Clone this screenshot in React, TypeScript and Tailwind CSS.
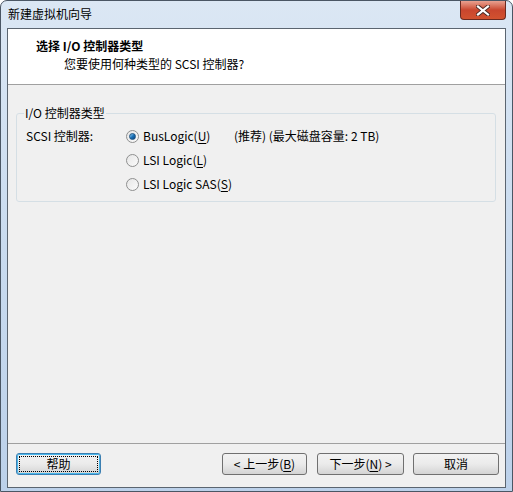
import React from "react";

const font = { fontFamily: '"Noto Sans CJK SC", "Noto Sans", sans-serif' };

function Radio({ checked }: { checked?: boolean }) {
  return (
    <span className="w-[13px] h-[13px] rounded-full border border-[#8e8f8f] bg-gradient-to-br from-[#e6e6e6] to-[#fbfbfb] flex items-center justify-center shrink-0">
      {checked && (
        <span className="w-[7px] h-[7px] rounded-full bg-gradient-to-br from-[#8fd2f7] via-[#1a72b8] to-[#0b3f7a] border border-[#1c5180]" />
      )}
    </span>
  );
}

function Btn({
  children,
  focused,
  w = "w-[85px]",
}: {
  children: React.ReactNode;
  focused?: boolean;
  w?: string;
}) {
  return (
    <div
      className={
        w +
        " h-[22px] rounded-[3px] flex items-center justify-center text-[12px] text-black bg-gradient-to-b from-[#f2f2f2] via-[#ebebeb] to-[#d4d4d4] " +
        (focused
          ? "border border-[#3c7fb1] shadow-[0_0_0_1px_#48b7ec_inset]"
          : "border border-[#707070]")
      }
    >
      {focused ? (
        <span className="w-[79px] h-[16px] border border-dotted border-black flex items-center justify-center leading-none">
          {children}
        </span>
      ) : (
        children
      )}
    </div>
  );
}

function Row({
  label,
  ul,
  rest,
  checked,
  extra,
}: {
  label: string;
  ul: string;
  rest: string;
  checked?: boolean;
  extra?: string;
}) {
  return (
    <div className="flex items-center h-[24px]">
      <Radio checked={checked} />
      <span className="ml-[4px] w-[91px]">
        {label}
        <span className="underline underline-offset-2">{ul}</span>
        {rest}
      </span>
      {extra && <span>{extra}</span>}
    </div>
  );
}

export default function App() {
  return (
    <div
      className="w-[513px] h-[492px] flex flex-col rounded-t-[7px] border border-[#4a5664] bg-gradient-to-b from-[#dbe7f4] via-[#c9dbef] to-[#bcd1ea] overflow-hidden"
      style={font}
    >
      {/* title bar */}
      <div className="h-[27px] flex items-start justify-between shrink-0">
        <div className="pl-[7px] pt-[5px] text-[12px] leading-[16px] text-black">
          新建虚拟机向导
        </div>
        <div className="mr-[6px] w-[46px] h-[19px] rounded-b-[4px] border border-t-0 border-[#6a2a20] bg-gradient-to-b from-[#e8a190] via-[#c9462e] to-[#d2522f] flex items-center justify-center">
          <svg width="14" height="11" viewBox="0 0 14 11">
            <path
              d="M2 1.5 L12 9.5 M12 1.5 L2 9.5"
              stroke="#4a2a25"
              strokeWidth="4"
              strokeLinecap="square"
            />
            <path
              d="M2 1.5 L12 9.5 M12 1.5 L2 9.5"
              stroke="#ffffff"
              strokeWidth="2.2"
              strokeLinecap="square"
            />
          </svg>
        </div>
      </div>

      {/* client area */}
      <div className="mx-[6px] mb-[3px] flex-1 flex flex-col border border-[#5b6570] bg-[#f0f0f0] text-[12px] text-black">
        <div className="h-[56px] bg-white border-b border-[#a0a0a0] shrink-0 pl-[28px] pt-[9px] flex flex-col gap-[2px]">
          <div className="font-bold leading-[16px]">选择 I/O 控制器类型</div>
          <div className="pl-[28px] leading-[16px]">
            您要使用何种类型的 SCSI 控制器?
          </div>
        </div>

        <div className="flex-1 flex flex-col">
          <fieldset className="mt-[20px] ml-[8px] mr-[9px] border border-[#d5dfe5] rounded-[3px] px-[9px] pb-[5px] pt-[3px]">
            <legend className="ml-[-2px] px-[1px] leading-[16px]">
              I/O 控制器类型
            </legend>
            <div className="flex leading-[16px]">
              <div className="w-[100px] h-[24px] flex items-center">
                SCSI 控制器:
              </div>
              <div className="flex flex-col">
                <Row
                  label="BusLogic("
                  ul="U"
                  rest=")"
                  checked
                  extra="(推荐) (最大磁盘容量: 2 TB)"
                />
                <Row label="LSI Logic(" ul="L" rest=")" />
                <Row label="LSI Logic SAS(" ul="S" rest=")" />
              </div>
            </div>
          </fieldset>
        </div>

        <div className="h-[44px] border-t border-[#a0a0a0] shrink-0 flex items-start pt-[9px] pl-[8px] pr-[6px]">
          <Btn focused>帮助</Btn>
          <div className="flex-1" />
          <div className="flex">
            <Btn>
              &lt; 上一步(<span className="underline underline-offset-2">B</span>)
            </Btn>
            <div className="w-[10px]" />
            <Btn w="w-[87px]">
              下一步(<span className="underline underline-offset-2">N</span>) &gt;
            </Btn>
            <div className="w-[9px]" />
            <Btn w="w-[86px]">取消</Btn>
          </div>
        </div>
      </div>
    </div>
  );
}
